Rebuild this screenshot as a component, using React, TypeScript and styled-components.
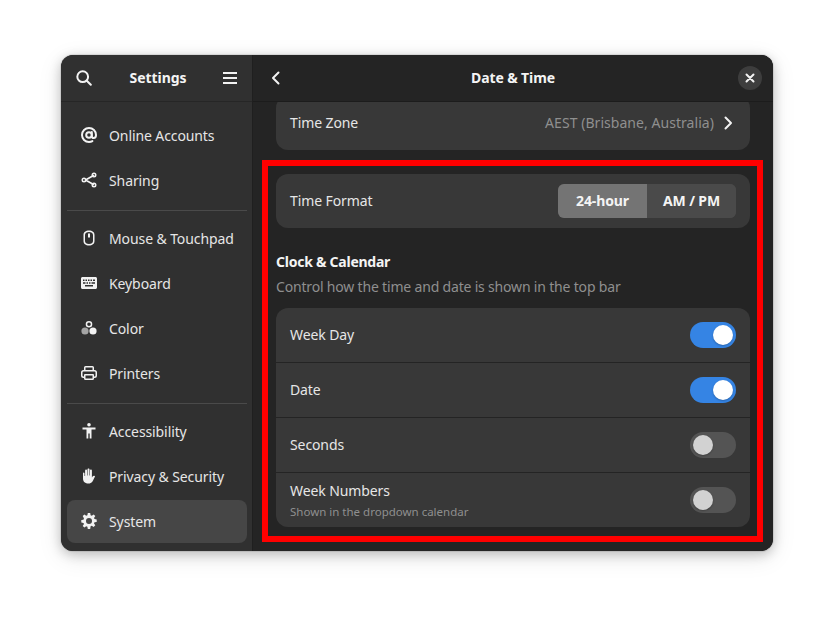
import React from "react";
import styled, { createGlobalStyle } from "styled-components";

const Global = createGlobalStyle`
  html, body { margin: 0; padding: 0; background: #fff; }
  body { font-family: "Noto Sans", "Open Sans", sans-serif; font-size: 14px; letter-spacing: -0.1px; color: #f2f2f2; }
`;

const Page = styled.div`
  width: 834px;
  height: 618px;
  padding: 55px 61px 67px;
  box-sizing: border-box;
  background: #fff;
  overflow: hidden;
`;

const Win = styled.div`
  position: relative;
  width: 712px;
  height: 496px;
  display: flex;
  border-radius: 12px;
  overflow: hidden;
  background: #242424;
  box-shadow: 0 0 0 1px rgba(0,0,0,.08), 0 3px 12px rgba(0,0,0,.22), 0 6px 24px rgba(0,0,0,.1);
`;

const Outline = styled.div`
  position: absolute;
  left: 201px;
  top: 105px;
  width: 501px;
  height: 382px;
  box-sizing: border-box;
  border: 6px solid #ff0000;
  pointer-events: none;
`;

const Side = styled.aside`
  width: 191px;
  flex: none;
  display: flex;
  flex-direction: column;
  background: #303030;
  border-right: 1px solid #1f1f1f;
`;

const SideBar = styled.header`
  height: 47px;
  box-sizing: border-box;
  flex: none;
  display: flex;
  align-items: center;
  justify-content: space-between;
  padding: 0 14px 1px 15px;
  border-bottom: 1px solid #262626;
`;

const SideTitle = styled.div`
  font-weight: 700;
  font-size: 14px;
  letter-spacing: -0.05px;
  margin-left: 2px;
  color: #f4f4f4;
`;

const Nav = styled.nav`
  display: flex;
  flex-direction: column;
  gap: 2px;
  padding: 12px 5px 8px 6px;
`;

const NavRow = styled.div<{ $active?: boolean }>`
  height: 43px;
  flex: none;
  display: flex;
  align-items: center;
  gap: 12px;
  padding: 0 14px 1px;
  box-sizing: border-box;
  border-radius: 8px;
  white-space: nowrap;
  background: ${(p) => (p.$active ? "#464646" : "transparent")};
  color: #e6e6e6;
`;

const NavIcon = styled.span`
  display: block;
  flex: none;
  height: 16px;
`;

const NavLine = styled.div`
  height: 1px;
  background: #4a4a4a;
  margin: 6px 0 4px;
`;

const Main = styled.main`
  flex: 1;
  min-width: 0;
  display: flex;
  flex-direction: column;
  background: #242424;
`;

const MainBar = styled.header`
  height: 47px;
  box-sizing: border-box;
  flex: none;
  display: flex;
  align-items: center;
  justify-content: space-between;
  padding: 0 11px 1px 15px;
  background: #242424;
  border-bottom: 1px solid #1c1c1c;
`;

const MainTitle = styled.div`
  font-weight: 700;
  font-size: 14px;
  letter-spacing: -0.12px;
  margin-left: 4px;
  color: #f4f4f4;
`;

const CloseBtn = styled.div`
  width: 24px;
  height: 24px;
  border-radius: 50%;
  background: #3d3d3d;
  display: flex;
  align-items: center;
  justify-content: center;
`;

const Scroll = styled.div`
  flex: 1;
  min-height: 0;
  overflow: hidden;
`;

const Column = styled.div`
  margin-top: -6px;
  padding: 0 23px;
  display: flex;
  flex-direction: column;
`;

const Card = styled.div<{ $mt?: number }>`
  background: #383838;
  border-radius: 12px;
  overflow: hidden;
  margin-top: ${(p) => p.$mt ?? 0}px;
`;

const Row = styled.div<{ $h?: number }>`
  height: ${(p) => p.$h ?? 54}px;
  box-sizing: border-box;
  display: flex;
  align-items: center;
  justify-content: space-between;
  padding: 0 14px;
  & + & { border-top: 1px solid #242424; }
`;

const RowLabel = styled.div`
  color: #e6e6e6;
  padding-bottom: 2px;
`;

const RowStack = styled.div`
  display: flex;
  flex-direction: column;
  gap: 3px;
`;

const RowSub = styled.div`
  color: #8f8f8f;
  font-size: 11.5px;
  letter-spacing: 0;
  line-height: 16px;
`;

const RowTitle = styled.div`
  color: #e6e6e6;
  line-height: 20px;
`;

const Trail = styled.div`
  display: flex;
  align-items: center;
  gap: 6px;
  color: #8f8f8f;
  letter-spacing: 0.05px;
`;

const TrailText = styled.span`
  padding-bottom: 2px;
`;

const Segment = styled.div`
  display: flex;
  height: 34px;
  border-radius: 6px;
  overflow: hidden;
  background: #4a4a4a;
`;

const SegBtn = styled.div<{ $on?: boolean; $w: number }>`
  width: ${(p) => p.$w}px;
  display: flex;
  align-items: center;
  justify-content: center;
  padding-bottom: 2px;
  box-sizing: border-box;
  font-weight: 700;
  letter-spacing: -0.12px;
  color: #f4f4f4;
  background: ${(p) => (p.$on ? "#747474" : "#4a4a4a")};
`;

const SectionTitle = styled.div`
  margin-top: 24px;
  font-weight: 700;
  letter-spacing: -0.25px;
  line-height: 20px;
  color: #f4f4f4;
`;

const SectionSub = styled.div`
  margin-top: 5px;
  line-height: 20px;
  letter-spacing: -0.18px;
  color: #8f8f8f;
`;

const Track = styled.div<{ $on?: boolean }>`
  width: 46px;
  height: 26px;
  border-radius: 13px;
  background: ${(p) => (p.$on ? "#3584e4" : "#545454")};
  display: flex;
  align-items: center;
  padding: 0 3px;
  box-sizing: border-box;
  justify-content: ${(p) => (p.$on ? "flex-end" : "flex-start")};
`;

const Knob = styled.div<{ $on?: boolean }>`
  width: 20px;
  height: 20px;
  border-radius: 50%;
  background: ${(p) => (p.$on ? "#ffffff" : "#d2d2d2")};
  box-shadow: 0 1px 2px rgba(0,0,0,.25);
`;

const Ico = ({ children, size = 16, stroke = false }: { children: React.ReactNode; size?: number; stroke?: boolean }) => (
  <svg
    width={size}
    height={size}
    viewBox="0 0 16 16"
    style={{ flex: "none", display: "block" }}
    fill={stroke ? "none" : "#f2f2f2"}
    stroke={stroke ? "#f2f2f2" : "none"}
    strokeWidth={stroke ? 2 : 0}
    strokeLinecap="round"
    strokeLinejoin="round"
  >
    {children}
  </svg>
);

const Search = () => (
  <Ico stroke>
    <circle cx="6.700" cy="6.700" r="5.400" />
    <path d="M10.800 10.800L14.800 14.800" />
  </Ico>
);
const Menu = () => (
  <Ico>
    <path d="M1 2h14v2H1zM1 7h14v2H1zM1 12h14v2H1z" />
  </Ico>
);
const Back = () => (
  <Ico stroke>
    <path d="M10.500 2.500L5 8l5.500 5.500" />
  </Ico>
);
const Next = () => (
  <Ico stroke>
    <path d="M5.500 2.500L11 8l-5.500 5.500" />
  </Ico>
);
const Close = () => (
  <svg width="10" height="10" viewBox="0 0 10 10" fill="none" stroke="#f2f2f2" strokeWidth="2" strokeLinecap="round">
    <path d="M1.500 1.500l7 7M8.500 1.500l-7 7" />
  </svg>
);
const At = () => (
  <Ico stroke>
    <circle cx="8" cy="8" r="2.800" />
    <path d="M10.800 5v4.200c0 1.100.8 1.800 1.900 1.800 1.300 0 2.300-1.300 2.300-3 0-3.900-3.100-7-7-7s-7 3.100-7 7 3.100 7 7 7c1.200 0 2.400-.3 3.400-.9" />
  </Ico>
);
const Share = () => (
  <Ico>
    <path d="M4.500 8l8-4.500M4.500 8l8 4.500" stroke="#f2f2f2" strokeWidth="1.600" fill="none" />
    <path
      fillRule="evenodd"
      d="M13 .5a2.500 2.500 0 1 1 0 5 2.500 2.500 0 0 1 0-5zm0 1.500a1 1 0 1 0 0 2 1 1 0 0 0 0-2zM3 5.500a2.500 2.500 0 1 1 0 5 2.500 2.500 0 0 1 0-5zM3 7a1 1 0 1 0 0 2 1 1 0 0 0 0-2zm10 3.500a2.500 2.500 0 1 1 0 5 2.500 2.500 0 0 1 0-5zm0 1.500a1 1 0 1 0 0 2 1 1 0 0 0 0-2z"
    />
  </Ico>
);
const Mouse = () => (
  <Ico>
    <path
      fillRule="evenodd"
      d="M8 .5c3.300 0 5.500 1.600 5.500 4.500v6c0 2.900-2.200 4.500-5.500 4.500S2.500 13.900 2.500 11V5C2.500 2.100 4.700.5 8 .5zM8 2C5.600 2 4 3 4 5v6c0 2 1.600 3 4 3s4-1 4-3V5c0-2-1.600-3-4-3zM7 3.500h2v4H7z"
    />
  </Ico>
);
const Keyboard = () => (
  <Ico>
    <path
      fillRule="evenodd"
      d="M1.500 2h13c.8 0 1.500.7 1.500 1.500v9c0 .8-.7 1.500-1.500 1.500h-13C.7 14 0 13.300 0 12.500v-9C0 2.700.7 2 1.500 2zM2 4.500V6h1.500V4.500zm2.500 0V6H6V4.500zM7 4.500V6h1.500V4.500zm2.500 0V6H11V4.500zM12 4.500V6h2V4.500zM2 7.200v1.600h2.500V7.200zm3.500 0v1.600H7V7.200zm2.500 0v1.600h1.500V7.200zm2.500 0v1.600H14V7.200zM4 10v1.600h8V10z"
    />
  </Ico>
);
const Color = () => (
  <Ico>
    <path
      fillRule="evenodd"
      d="M8 1a3.300 3.300 0 1 1 0 6.600A3.300 3.300 0 0 1 8 1zm0 1.500a1.800 1.800 0 1 0 0 3.600 1.800 1.800 0 0 0 0-3.600z"
    />
    <circle cx="12" cy="11" r="3.600" />
    <path d="M4 7.400a3.600 3.600 0 1 1 0 7.200 3.600 3.600 0 0 1 0-7.200z" fillOpacity=".6" />
  </Ico>
);
const Printer = () => (
  <Ico>
    <path
      fillRule="evenodd"
      d="M4.500 1h7A1.500 1.500 0 0 1 13 2.500V5h.5A2.500 2.500 0 0 1 16 7.500v3a2.500 2.500 0 0 1-2.500 2.500H13v.5a1.500 1.500 0 0 1-1.500 1.500h-7A1.500 1.500 0 0 1 3 13.500V13h-.5A2.500 2.500 0 0 1 0 10.500v-3A2.500 2.500 0 0 1 2.500 5H3V2.500A1.500 1.500 0 0 1 4.500 1zm0 1.500V5h7V2.500zm-2 4a1 1 0 0 0-1 1v3a1 1 0 0 0 1 1H3V10a1 1 0 0 1 1-1h8a1 1 0 0 1 1 1v1.500h.5a1 1 0 0 0 1-1v-3a1 1 0 0 0-1-1zm2 4v3h7v-3z"
    />
  </Ico>
);
const Access = () => (
  <Ico>
    <circle cx="8" cy="1.800" r="1.800" />
    <path d="M1.500 4.500h13V6.500H10.500V15.500H8.700V10.500H7.300V15.500H5.500V6.500H1.500z" />
  </Ico>
);
const Hand = () => (
  <Ico>
    <path d="M2.500 4.500c.5 0 1 .4 1 1V8h.6V2.500c0-.6.4-1 .9-1s1 .4 1 1V7.500h.5V1.500c0-.6.4-1 1-1s1 .4 1 1V7.500h.5V2.500c0-.6.4-1 1-1s.9.4.9 1V9.500c.5-.8 1.100-1.800 2-1.800.6 0 1.100.3 1.100.7 0 .4-.5 1-1 2-1 2.200-2 5.100-5.500 5.100-4.200 0-5.500-2.500-5.500-5V5.500c0-.6.5-1 1-1z" />
  </Ico>
);
const Gear = () => (
  <Ico>
    <path
      fillRule="evenodd"
      d="M6.800 0h2.400l.4 2.200c.4.1.8.3 1.200.5l1.800-1.300 1.700 1.700-1.300 1.800c.2.4.4.8.5 1.200l2.200.4v2.400l-2.200.4c-.1.4-.3.8-.5 1.200l1.300 1.800-1.700 1.700-1.800-1.300c-.4.2-.8.4-1.200.5L9.200 16H6.800l-.4-2.200c-.4-.1-.8-.3-1.200-.5l-1.800 1.300-1.700-1.700L3 11.100c-.2-.4-.4-.8-.5-1.200L.3 9.500V7.100l2.200-.4c.1-.4.3-.8.5-1.200L1.700 3.100l1.700-1.700 1.800 1.300c.4-.2.8-.4 1.200-.5zM8 5a3 3 0 1 0 0 6 3 3 0 0 0 0-6z"
    />
  </Ico>
);

const navA = [
  { l: "Online Accounts", i: <At /> },
  { l: "Sharing", i: <Share /> },
];
const navB = [
  { l: "Mouse & Touchpad", i: <Mouse /> },
  { l: "Keyboard", i: <Keyboard /> },
  { l: "Color", i: <Color /> },
  { l: "Printers", i: <Printer /> },
];
const navC = [
  { l: "Accessibility", i: <Access /> },
  { l: "Privacy & Security", i: <Hand /> },
  { l: "System", i: <Gear />, active: true },
];

const Toggle = ({ on }: { on?: boolean }) => (
  <Track $on={on}>
    <Knob $on={on} />
  </Track>
);

export default function App() {
  const renderNav = (items: { l: string; i: React.ReactNode; active?: boolean }[]) =>
    items.map((n) => (
      <NavRow key={n.l} $active={n.active}>
        <NavIcon>{n.i}</NavIcon>
        <span>{n.l}</span>
      </NavRow>
    ));
  return (
    <>
      <Global />
      <Page>
        <Win>
          <Side>
            <SideBar>
              <Search />
              <SideTitle>Settings</SideTitle>
              <Menu />
            </SideBar>
            <Nav>
              {renderNav(navA)}
              <NavLine />
              {renderNav(navB)}
              <NavLine />
              {renderNav(navC)}
            </Nav>
          </Side>
          <Main>
            <MainBar>
              <Back />
              <MainTitle>Date &amp; Time</MainTitle>
              <CloseBtn>
                <Close />
              </CloseBtn>
            </MainBar>
            <Scroll>
              <Column>
                <Card>
                  <Row>
                    <RowLabel>Time Zone</RowLabel>
                    <Trail>
                      <TrailText>AEST (Brisbane, Australia)</TrailText>
                      <Next />
                    </Trail>
                  </Row>
                </Card>
                <Card $mt={24}>
                  <Row>
                    <RowLabel>Time Format</RowLabel>
                    <Segment>
                      <SegBtn $on $w={89}>24-hour</SegBtn>
                      <SegBtn $w={89}>AM / PM</SegBtn>
                    </Segment>
                  </Row>
                </Card>
                <SectionTitle>Clock &amp; Calendar</SectionTitle>
                <SectionSub>Control how the time and date is shown in the top bar</SectionSub>
                <Card $mt={11}>
                  <Row><RowLabel>Week Day</RowLabel><Toggle on /></Row>
                  <Row $h={55}><RowLabel>Date</RowLabel><Toggle on /></Row>
                  <Row $h={55}><RowLabel>Seconds</RowLabel><Toggle /></Row>
                  <Row $h={55}>
                    <RowStack>
                      <RowTitle>Week Numbers</RowTitle>
                      <RowSub>Shown in the dropdown calendar</RowSub>
                    </RowStack>
                    <Toggle />
                  </Row>
                </Card>
              </Column>
            </Scroll>
          </Main>
          <Outline />
        </Win>
      </Page>
    </>
  );
}
